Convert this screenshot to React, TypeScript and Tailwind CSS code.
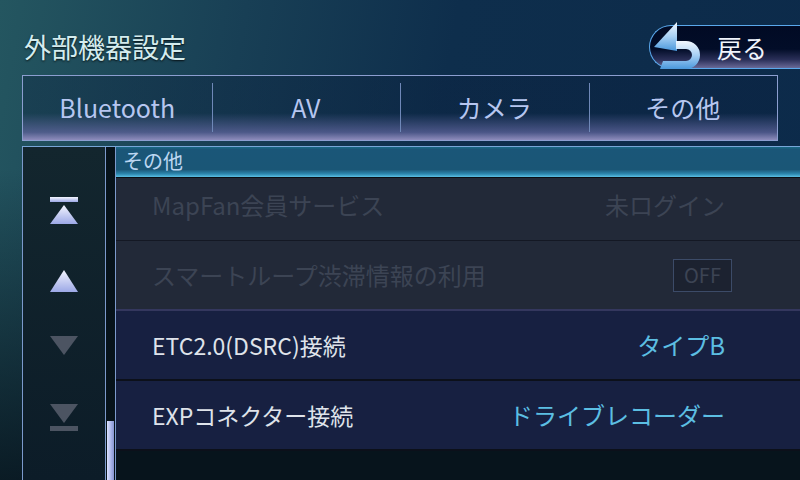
import React from "react"

const font = { fontFamily: '"Noto Sans CJK JP", "Noto Sans", sans-serif' }

function BackArrow() {
  return (
    <svg width="52" height="52" viewBox="0 0 52 52" className="absolute left-[2px] top-[-6px]">
      <defs>
        <linearGradient id="ba" x1="0" y1="0" x2="0" y2="1">
          <stop offset="0" stopColor="#f2f8ff" />
          <stop offset="0.5" stopColor="#a8d0f4" />
          <stop offset="1" stopColor="#4a98dc" />
        </linearGradient>
      </defs>
      <polygon points="2,27 25,2 25,31" fill="url(#ba)" />
      <path d="M24 21 H34 A14 14 0 0 1 34 49 H8 L11 41 H34 A6 6 0 0 0 34 29 H24 Z" fill="url(#ba)" />
    </svg>
  )
}

function Tri({ up, on, bar }: { up: boolean; on: boolean; bar?: boolean }) {
  const id = on ? "ton" : "toff"
  return (
    <svg width="28" height={bar ? 27 : 22} viewBox={bar ? "0 0 28 27" : "0 0 28 22"}>
      <defs>
        <linearGradient id="ton" x1="0" y1="0" x2="0" y2="1">
          <stop offset="0" stopColor="#f4f6ff" />
          <stop offset="1" stopColor="#9ca8e6" />
        </linearGradient>
        <linearGradient id="toff" x1="0" y1="0" x2="0" y2="1">
          <stop offset="0" stopColor="#4c5462" />
          <stop offset="1" stopColor="#4c5462" />
        </linearGradient>
      </defs>
      {bar && up && <rect x="0" y="0" width="28" height="5" fill={`url(#${id})`} />}
      {up ? (
        <polygon points={bar ? "14,8 28,27 0,27" : "14,0 28,22 0,22"} fill={`url(#${id})`} />
      ) : (
        <polygon points="0,0 28,0 14,19" fill={`url(#${id})`} />
      )}
      {bar && !up && <rect x="0" y="22" width="28" height="5" fill={`url(#${id})`} />}
    </svg>
  )
}

export default function App() {
  const tabs = ["Bluetooth", "AV", "カメラ", "その他"]
  return (
    <div
      style={font}
      className="w-[800px] h-[480px] overflow-hidden flex flex-col bg-[linear-gradient(180deg,rgba(0,0,0,0)_35%,rgba(3,10,18,0.75)_100%),linear-gradient(100deg,#245660_0%,#183f55_28%,#0e2e4c_52%,#0c2a4a_100%)]"
    >
      {/* header */}
      <div className="h-[75px] flex items-start shrink-0">
        <div className="ml-[24px] mt-[33px] text-[27px] leading-none text-[#d4ecee] [text-shadow:0_1px_2px_rgba(0,0,0,0.8)]">
          外部機器設定
        </div>
        <div className="relative ml-auto mt-[25px] w-[151px] h-[44px] rounded-l-full border border-r-0 border-[#5aa8ec] bg-[linear-gradient(180deg,#010a24_0%,#020d28_55%,#2a2f58_80%,#6a6a98_100%)] flex items-center">
          <BackArrow />
          <span className="ml-[67px] text-[25px] leading-none text-[#f0f4fc]">戻る</span>
        </div>
      </div>

      {/* tabs */}
      <div className="mx-[22px] h-[66px] shrink-0 border border-[#8c9ed0] flex bg-[linear-gradient(180deg,rgba(10,30,60,0.35)_0%,rgba(10,30,60,0.35)_58%,rgba(90,96,150,0.8)_88%,#8e8cbc_100%)]">
        {tabs.map((t, i) => (
          <div key={t} className="flex-1 flex items-center justify-center relative">
            {i > 0 && <div className="absolute left-0 top-[7px] bottom-[8px] w-px bg-[#6f88b8]" />}
            <span className="text-[25px] leading-none text-[#b6c6f0] -mt-[2px]">{t}</span>
          </div>
        ))}
      </div>

      {/* main */}
      <div className="mt-[5px] ml-[22px] flex-1 flex border-t border-[#78a6d8]">
        <div className="w-[84px] border-x border-[#7c9acc] bg-[linear-gradient(180deg,#13262e_0%,#0c1c28_100%)] flex flex-col items-center pt-[50px]">
          <Tri up on bar />
          <div className="h-[46px]" />
          <Tri up on />
          <div className="h-[44px]" />
          <Tri up={false} on={false} />
          <div className="h-[46px]" />
          <Tri up={false} on={false} bar />
        </div>
        <div className="w-[9px] bg-[#07131b] flex flex-col justify-end items-center">
          <div className="w-[7px] h-[59px] bg-[linear-gradient(90deg,#dce2ff_0%,#a6b2e8_60%,#8694d0_100%)]" />
        </div>
        <div className="flex-1 border-l border-[#7c9acc] flex flex-col bg-[#07141c]">
          <div className="h-[31px] shrink-0 border-b border-[#0a0e14] bg-[linear-gradient(180deg,#1a6a86_0%,#1a5678_8%,#1a5676_75%,#2d88b0_90%,#5cc0e4_100%)] flex items-center pl-[7px]">
            <span className="text-[20px] leading-none text-[#bcd6f2] -mt-[2px]">その他</span>
          </div>
          <div className="h-[63px] shrink-0 bg-[#222938] border-b border-[#141824] flex items-center pl-[36px] pr-[75px] pb-[8px] text-[24px] text-[#3c4454]">
            <span>MapFan会員サービス</span>
            <span className="ml-auto">未ログイン</span>
          </div>
          <div className="h-[70px] shrink-0 bg-[#222938] border-b-2 border-[#34375e] flex items-center pl-[36px] pr-[68px] text-[24px] text-[#3c4454]">
            <span>スマートループ渋滞情報の利用</span>
            <span className="ml-auto w-[59px] h-[33px] border border-[#3c4b68] bg-[#1c2230] flex items-center justify-center text-[20px] leading-none">
              OFF
            </span>
          </div>
          <div className="h-[70px] shrink-0 bg-[#172041] border-b-2 border-[#0c101a] flex items-center pl-[36px] pr-[75px] text-[23px]">
            <span className="text-[#dfe3ea]">ETC2.0(DSRC)接続</span>
            <span className="ml-auto text-[24px] text-[#5cbee2]">タイプB</span>
          </div>
          <div className="h-[70px] shrink-0 bg-[#172041] border-b-2 border-[#0c101a] flex items-center pl-[36px] pr-[75px] text-[23px]">
            <span className="text-[#dfe3ea]">EXPコネクター接続</span>
            <span className="ml-auto text-[24px] text-[#5cbee2]">ドライブレコーダー</span>
          </div>
        </div>
      </div>
    </div>
  )
}
